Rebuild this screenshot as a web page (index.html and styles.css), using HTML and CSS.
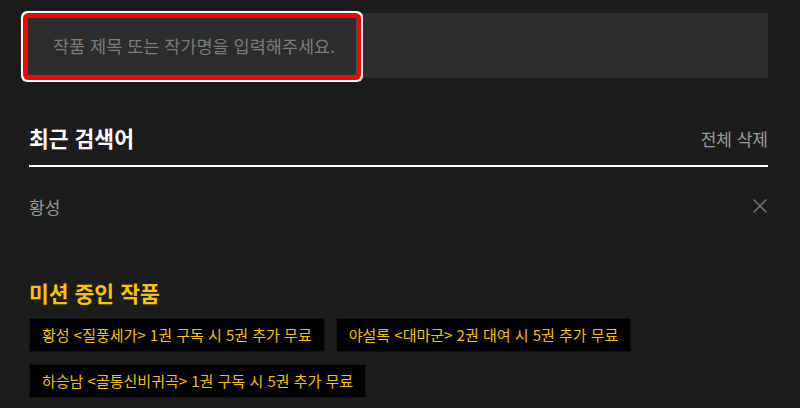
FILE: index.html
```html
<!DOCTYPE html>
<html lang="ko">
<head>
  <meta charset="UTF-8">
  <title>작품 검색</title>
  <link rel="stylesheet" href="styles.css">
</head>
<body>
  <div class="page">
    <!-- 검색 입력 -->
    <div class="search-box">
      <input type="text" class="search-input" placeholder="작품 제목 또는 작가명을 입력해주세요.">
    </div>

    <!-- 최근 검색어 -->
    <section class="recent">
      <div class="section-head">
        <h2>최근 검색어</h2>
        <button type="button" class="clear-all">전체 삭제</button>
      </div>
      <ul class="recent-list">
        <li class="recent-item">
          <span>황성</span>
          <button type="button" class="remove" aria-label="삭제">
            <svg width="16" height="16" viewBox="0 0 16 16">
              <path d="M1.5 1.5 L14.5 14.5 M14.5 1.5 L1.5 14.5" stroke="#6a6a6a" stroke-width="1.6" fill="none"/>
            </svg>
          </button>
        </li>
      </ul>
    </section>

    <!-- 미션 중인 작품 -->
    <section class="mission">
      <h2>미션 중인 작품</h2>
      <div class="chips">
        <a class="chip">황성 &lt;질풍세가&gt; 1권 구독 시 5권 추가 무료</a>
        <a class="chip">야설록 &lt;대마군&gt; 2권 대여 시 5권 추가 무료</a>
        <a class="chip">하승남 &lt;골통신비귀곡&gt; 1권 구독 시 5권 추가 무료</a>
      </div>
    </section>
  </div>
</body>
</html>
```

FILE: styles.css
```css
/* 기본 리셋 */
* { margin: 0; padding: 0; box-sizing: border-box; }
body {
  font-family: "Noto Sans CJK KR", "Noto Sans", sans-serif;
  background-color: #1c1c1c;
  color: #fff;
}
.page {
  padding: 13px 32px 0 29px;
}
/* 검색창 */
.search-box {
  background-color: #2d2d2d;
  height: 65px;
  padding-top: 4px;
}
.search-input {
  display: block;
  width: 330px;
  height: 59px;
  margin-left: -2px;
  padding: 0 0 2px 25px;
  background-color: #2d2d2d;
  border: 1px solid #4e4e4e;
  border-radius: 2px;
  box-shadow: 0 0 0 4px #ff0000, 0 0 0 6px #fff;
  outline: none;
  font-family: inherit;
  font-size: 17.5px;
  color: #ddd;
}
.search-input::placeholder {
  color: #7a7a7a;
}
/* 섹션 제목 */
h2 {
  font-size: 21.5px;
  line-height: 30px;
  font-weight: bold;
}
.recent {
  margin-top: 45px;
}
.section-head {
  display: flex;
  justify-content: space-between;
  align-items: center;
  padding-bottom: 12px;
  border-bottom: 2px solid #fff;
}
.clear-all {
  background: none;
  border: none;
  font-family: inherit;
  font-size: 17px;
  color: #9a9a9a;
  cursor: pointer;
}
.recent-list {
  list-style: none;
  margin-top: 26px;
}
.recent-item {
  display: flex;
  justify-content: space-between;
  align-items: center;
  height: 26px;
  font-size: 17px;
  color: #9a9a9a;
}
.remove {
  display: flex;
  background: none;
  border: none;
  cursor: pointer;
}
/* 미션 중인 작품 */
.mission {
  margin-top: 59px;
}
.mission h2 {
  color: #f8c301;
}
.chips {
  display: flex;
  flex-wrap: wrap;
  gap: 12px 11px;
  margin-top: 10px;
}
.chip {
  display: block;
  height: 34px;
  padding: 0 12px;
  line-height: 32px;
  background-color: #000;
  border: 1px solid #111;
  font-size: 15px;
  color: #f3c200;
  cursor: pointer;
}
```
